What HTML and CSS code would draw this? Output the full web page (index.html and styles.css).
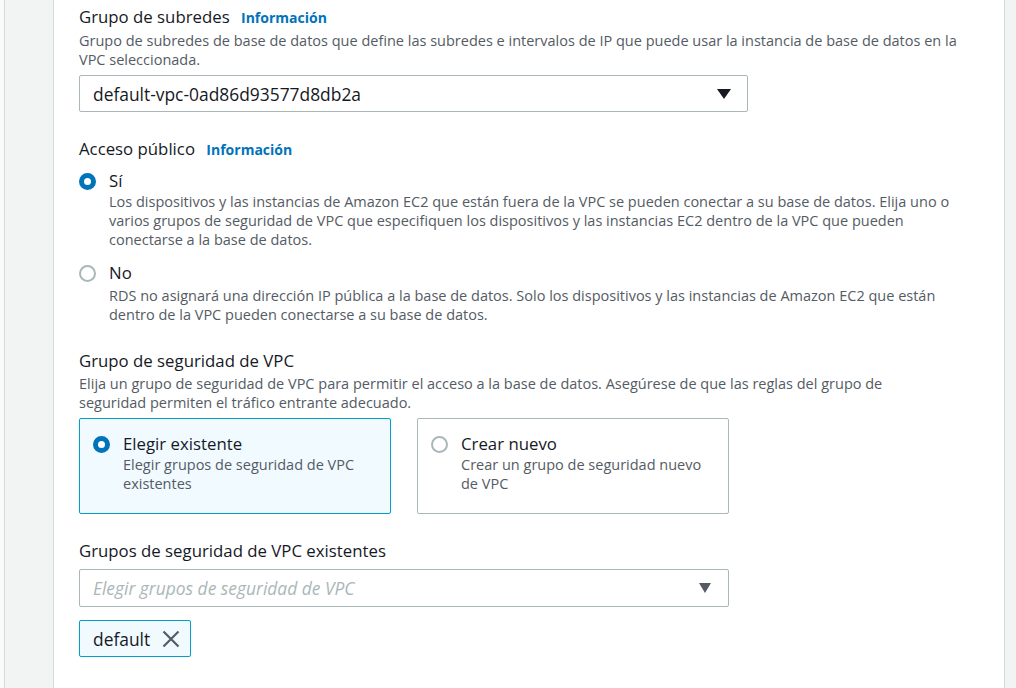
FILE: index.html
```html
<!DOCTYPE html>
<html lang="es">
<head>
<meta charset="utf-8">
<link rel="stylesheet" href="styles.css">
</head>
<body>
<div class="page">
  <div class="edge"></div>
  <div class="side"></div>
  <main class="main">
    <section class="field first">
      <div class="label">Grupo de subredes <a class="info">Información</a></div>
      <div class="desc">Grupo de subredes de base de datos que define las subredes e intervalos de IP que puede usar la instancia de base de datos en la<br>VPC seleccionada.</div>
      <div class="select wide">
        <span class="value">default-vpc-0ad86d93577d8db2a</span>
        <span class="caret dark"></span>
      </div>
    </section>

    <section class="field">
      <div class="label">Acceso público <a class="info">Información</a></div>
      <div class="radio-row">
        <span class="radio on"></span>
        <div class="radio-text">
          <div class="radio-title">Sí</div>
          <div class="desc">Los dispositivos y las instancias de Amazon EC2 que están fuera de la VPC se pueden conectar a su base de datos. Elija uno o<br>varios grupos de seguridad de VPC que especifiquen los dispositivos y las instancias EC2 dentro de la VPC que pueden<br>conectarse a la base de datos.</div>
        </div>
      </div>
      <div class="radio-row second">
        <span class="radio"></span>
        <div class="radio-text">
          <div class="radio-title">No</div>
          <div class="desc">RDS no asignará una dirección IP pública a la base de datos. Solo los dispositivos y las instancias de Amazon EC2 que están<br>dentro de la VPC pueden conectarse a su base de datos.</div>
        </div>
      </div>
    </section>

    <section class="field">
      <div class="label">Grupo de seguridad de VPC</div>
      <div class="desc">Elija un grupo de seguridad de VPC para permitir el acceso a la base de datos. Asegúrese de que las reglas del grupo de<br>seguridad permiten el tráfico entrante adecuado.</div>
      <div class="cards">
        <div class="card selected">
          <span class="radio on"></span>
          <div class="radio-text">
            <div class="radio-title">Elegir existente</div>
            <div class="desc">Elegir grupos de seguridad de VPC<br>existentes</div>
          </div>
        </div>
        <div class="card">
          <span class="radio"></span>
          <div class="radio-text">
            <div class="radio-title">Crear nuevo</div>
            <div class="desc">Crear un grupo de seguridad nuevo<br>de VPC</div>
          </div>
        </div>
      </div>
    </section>

    <section class="field">
      <div class="label">Grupos de seguridad de VPC existentes</div>
      <div class="select narrow">
        <span class="placeholder">Elegir grupos de seguridad de VPC</span>
        <span class="caret gray"></span>
      </div>
      <div class="token">
        <span>default</span>
        <svg class="x" width="18" height="18" viewBox="0 0 18 18"><path d="M1.5 1.5 L16.5 16.5 M16.5 1.5 L1.5 16.5" stroke="#545b64" stroke-width="2.2" fill="none"/></svg>
      </div>
    </section>

    <section class="field last">
      <div class="label">Zona de disponibilidad</div>
    </section>
  </main>
  <div class="side right"></div>
</div>
</body>
</html>
```

FILE: styles.css
```css
* { box-sizing: border-box; }
html, body { margin: 0; padding: 0; }
body {
  font-family: "Open Sans", "Noto Sans", "Liberation Sans", sans-serif;
  color: #16191f;
  background: #ffffff;
  height: 688px;
  overflow: hidden;
}
.page {
  display: flex;
  height: 688px;
}
.edge {
  width: 4px;
  background: #fafafa;
  flex: none;
}
.side {
  width: 50px;
  flex: none;
  background: #f2f3f3;
  border-left: 1px solid #d5dbdb;
  border-right: 1px solid #d5dbdb;
}
.side.right {
  width: 12px;
  border-right: none;
}
.main {
  flex: 1;
  padding: 6px 10px 0 25px;
  background: #fff;
  white-space: nowrap;
}
.field { margin-bottom: 26px; }
.label {
  font-size: 16.8px;
  line-height: 22px;
  color: #16191f;
}
.info {
  font-size: 14px;
  font-weight: 700;
  color: #0073bb;
  margin-left: 7px;
}
.desc {
  font-size: 14.5px;
  line-height: 19px;
  color: #545b64;
  margin-top: 2px;
}
.select {
  margin-top: 6px;
  height: 37px;
  border: 1px solid #aab7b8;
  border-radius: 2px;
  display: flex;
  align-items: center;
  justify-content: space-between;
  padding: 0 16px 0 13px;
  font-size: 17.4px;
}
.select.wide { width: 669px; }
.select.narrow { width: 650px; height: 38px; margin-top: 7px; padding-right: 17px; }
.placeholder { font-style: italic; color: #aab7b8; }
.caret {
  width: 0; height: 0;
  border-left: 7px solid transparent;
  border-right: 7px solid transparent;
  border-top: 10px solid #16191f;
}
.caret.gray { border-top-color: #545b64; border-left-width: 6px; border-right-width: 6px; border-top-width: 10px; }
.radio-row {
  display: flex;
  gap: 13px;
  margin-top: 9px;
}
.radio-row.second { margin-top: 13px; }
.radio-row.second .desc { margin-top: 2px; }
.radio {
  width: 17px; height: 17px;
  flex: none;
  border-radius: 50%;
  border: 2px solid #aab7b8;
  background: #fff;
  margin-top: 3px;
}
.radio.on { border: 5px solid #0073bb; }
.radio-title {
  font-size: 16.8px;
  line-height: 22px;
}
.radio-text .desc { margin-top: 0; }
.cards {
  display: flex;
  gap: 26px;
  margin-top: 6px;
}
.card {
  width: 312px;
  height: 96px;
  border: 1px solid #aab7b8;
  border-radius: 2px;
  display: flex;
  gap: 13px;
  padding: 14px 10px 0 13px;
}
.card.selected {
  background: #f1faff;
  border-color: #00a1c9;
}
.card .desc { line-height: 18.5px; margin-top: 1px; font-size: 14.5px; }
.token {
  margin-top: 13px;
  width: 112px;
  height: 37px;
  border: 1px solid #00a1c9;
  border-radius: 2px;
  background: #f1faff;
  display: flex;
  align-items: center;
  padding: 0 9px 0 13px;
  gap: 12px;
  font-size: 17.4px;
}
.last { margin-bottom: 0; }
```
